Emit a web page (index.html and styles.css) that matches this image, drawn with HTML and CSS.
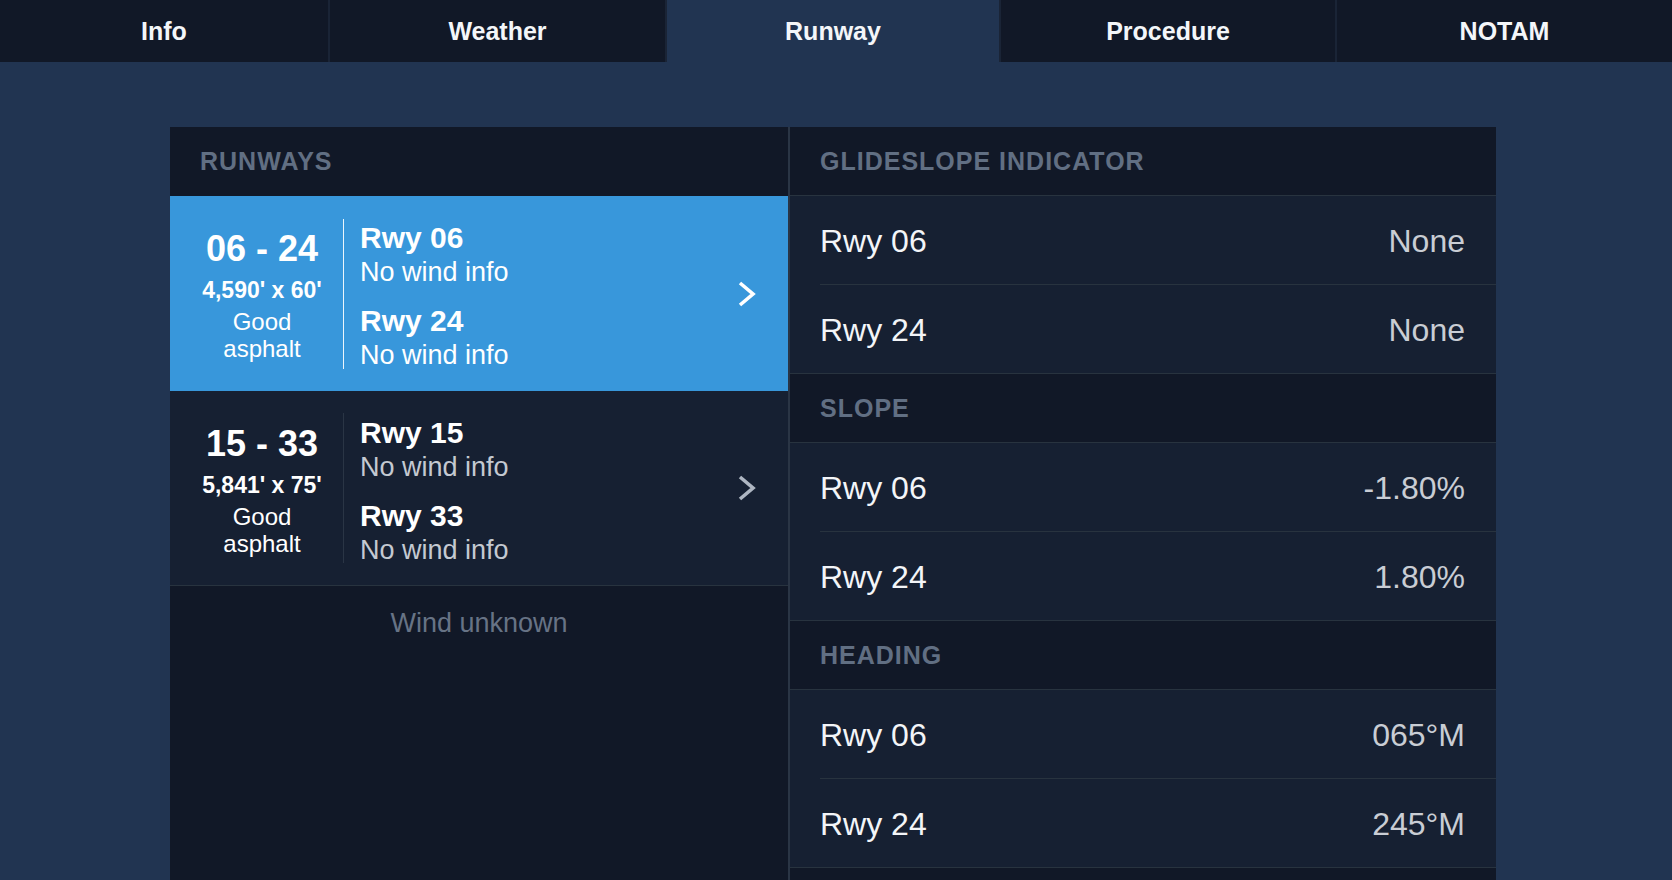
FILE: index.html
```html
<!DOCTYPE html>
<html lang="en">
<head>
<meta charset="utf-8">
<title>Runway</title>
<link rel="stylesheet" href="styles.css">
</head>
<body>
<nav class="tabs">
  <div class="tab">Info</div>
  <div class="tab">Weather</div>
  <div class="tab active">Runway</div>
  <div class="tab">Procedure</div>
  <div class="tab">NOTAM</div>
</nav>
<main class="content">
  <div class="card">
    <section class="runways">
      <div class="section-header">RUNWAYS</div>
      <div class="rwy-row active">
        <div class="rwy-summary">
          <div class="rwy-pair">06 - 24</div>
          <div class="rwy-dims">4,590' x 60'</div>
          <div class="rwy-surface">Good<br>asphalt</div>
        </div>
        <div class="rwy-divider"></div>
        <div class="rwy-ends">
          <div class="rwy-end">
            <div class="rwy-name">Rwy 06</div>
            <div class="rwy-wind">No wind info</div>
          </div>
          <div class="rwy-end">
            <div class="rwy-name">Rwy 24</div>
            <div class="rwy-wind">No wind info</div>
          </div>
        </div>
        <svg class="chevron" viewBox="0 0 20 26" width="20" height="26"><polyline points="3,2 16,13 3,24" fill="none" stroke="currentColor" stroke-width="3.6"/></svg>
      </div>
      <div class="rwy-row">
        <div class="rwy-summary">
          <div class="rwy-pair">15 - 33</div>
          <div class="rwy-dims">5,841' x 75'</div>
          <div class="rwy-surface">Good<br>asphalt</div>
        </div>
        <div class="rwy-divider"></div>
        <div class="rwy-ends">
          <div class="rwy-end">
            <div class="rwy-name">Rwy 15</div>
            <div class="rwy-wind">No wind info</div>
          </div>
          <div class="rwy-end">
            <div class="rwy-name">Rwy 33</div>
            <div class="rwy-wind">No wind info</div>
          </div>
        </div>
        <svg class="chevron" viewBox="0 0 20 26" width="20" height="26"><polyline points="3,2 16,13 3,24" fill="none" stroke="currentColor" stroke-width="3.6"/></svg>
      </div>
      <div class="wind-note">Wind unknown</div>
    </section>
    <section class="details">
      <div class="section-header">GLIDESLOPE INDICATOR</div>
      <div class="detail-group">
        <div class="detail-row"><span class="detail-label">Rwy 06</span><span class="detail-value">None</span></div>
        <div class="detail-row"><span class="detail-label">Rwy 24</span><span class="detail-value">None</span></div>
      </div>
      <div class="section-header">SLOPE</div>
      <div class="detail-group">
        <div class="detail-row"><span class="detail-label">Rwy 06</span><span class="detail-value">-1.80%</span></div>
        <div class="detail-row"><span class="detail-label">Rwy 24</span><span class="detail-value">1.80%</span></div>
      </div>
      <div class="section-header">HEADING</div>
      <div class="detail-group">
        <div class="detail-row"><span class="detail-label">Rwy 06</span><span class="detail-value">065°M</span></div>
        <div class="detail-row"><span class="detail-label">Rwy 24</span><span class="detail-value">245°M</span></div>
      </div>
      <div class="section-header section-header-tail"></div>
    </section>
  </div>
</main>
</body>
</html>
```

FILE: styles.css
```css
* { box-sizing: border-box; }

html, body {
  margin: 0;
  padding: 0;
}

body {
  width: 1672px;
  height: 880px;
  overflow: hidden;
  background: #213451;
  font-family: "Liberation Sans", Arial, sans-serif;
  color: #ffffff;
}

.tabs {
  display: grid;
  grid-template-columns: 328px 335px 332px 334px 1fr;
  column-gap: 2px;
  height: 62px;
  background: #1a2436;
}

.tab {
  display: flex;
  align-items: center;
  justify-content: center;
  background: #111827;
  font-size: 25px;
  font-weight: bold;
  color: #f4f6f9;
}

.tab.active {
  background: #213451;
}

.content {
  padding: 65px 0 0 170px;
}

.card {
  display: flex;
  width: 1326px;
  height: 753px;
  overflow: hidden;
}

.runways {
  width: 620px;
  background: #111827;
  border-right: 2px solid #2a3545;
}

.section-header {
  display: flex;
  align-items: center;
  height: 69px;
  padding-left: 30px;
  background: #111827;
  font-size: 25px;
  font-weight: bold;
  letter-spacing: 1px;
  color: #616f83;
}

.details .section-header {
  border-bottom: 1px solid #28333f;
}

.rwy-row {
  display: flex;
  align-items: center;
  height: 195px;
  background: #162032;
  border-bottom: 1px solid #28333f;
}

.rwy-row.active {
  background: #3897db;
  border-bottom: none;
}

.rwy-summary {
  width: 152px;
  margin-left: 16px;
  padding-top: 1px;
  text-align: center;
}

.rwy-pair {
  font-size: 36px;
  font-weight: bold;
  line-height: 46px;
}

.rwy-dims {
  font-size: 23px;
  font-weight: bold;
  line-height: 36px;
}

.rwy-surface {
  font-size: 24px;
  line-height: 27px;
}

.rwy-divider {
  width: 1px;
  height: 150px;
  margin-left: 5px;
  background: #2a3545;
}

.rwy-row.active .rwy-divider {
  background: rgba(255, 255, 255, 0.9);
}

.rwy-ends {
  display: flex;
  flex-direction: column;
  gap: 15px;
  padding-left: 16px;
  padding-top: 6px;
}

.rwy-name {
  font-size: 30px;
  font-weight: bold;
  line-height: 34px;
}

.rwy-wind {
  font-size: 27px;
  line-height: 34px;
  color: #c4c9d1;
}

.rwy-row.active .rwy-wind {
  color: #ffffff;
}

.chevron {
  margin-left: auto;
  margin-right: 31px;
  color: #aeb6c2;
}

.rwy-row.active .chevron {
  color: #ffffff;
}

.wind-note {
  padding-top: 24px;
  text-align: center;
  font-size: 27px;
  line-height: 27px;
  color: #677385;
}

.details {
  flex: 1;
  background: #111827;
}

.detail-group {
  background: #162032;
  padding-left: 30px;
}

.detail-row {
  display: flex;
  align-items: center;
  justify-content: space-between;
  height: 89px;
  padding-top: 3px;
  padding-right: 31px;
  border-bottom: 1px solid #28333f;
}

.detail-row:last-child {
  margin-left: -30px;
  padding-left: 30px;
}

.detail-label {
  font-size: 32px;
  color: #f3f5f8;
}

.detail-value {
  font-size: 32px;
  color: #c9cdd4;
}
```
